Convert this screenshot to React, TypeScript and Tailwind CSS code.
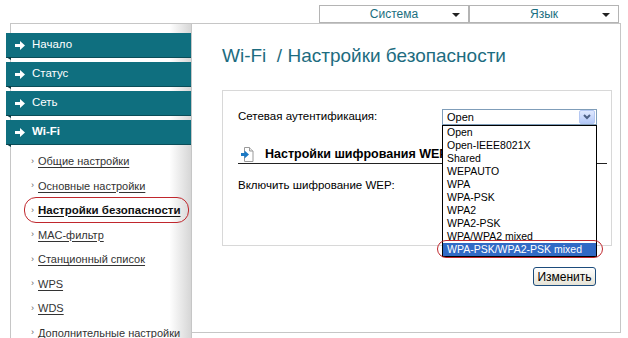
import React from 'react';

const TEAL = '#0f6f7f';

const menu = ['Начало', 'Статус', 'Сеть', 'Wi-Fi'];
const submenu = [
  'Общие настройки',
  'Основные настройки',
  'Настройки безопасности',
  'MAC-фильтр',
  'Станционный список',
  'WPS',
  'WDS',
  'Дополнительные настройки',
];
const options = [
  'Open',
  'Open-IEEE8021X',
  'Shared',
  'WEPAUTO',
  'WPA',
  'WPA-PSK',
  'WPA2',
  'WPA2-PSK',
  'WPA/WPA2 mixed',
  'WPA-PSK/WPA2-PSK mixed',
];

function ArrowIcon() {
  return (
    <svg width="10" height="9" viewBox="0 0 10 9" className="shrink-0">
      <path d="M0 3h5V0l5 4.5L5 9V6H0z" fill="#fff" />
    </svg>
  );
}

function PageIcon() {
  return (
    <svg width="13" height="15" viewBox="0 0 13 15" className="shrink-0">
      <path d="M3.5 0.5h5l3.5 3.5v10.5h-8.5z" fill="#fff" stroke="#9a9a9a" />
      <path d="M8.5 0.5v3.5h3.5" fill="#e8e8e8" stroke="#9a9a9a" />
      <path d="M0 6h3.5V3.5L8 7.5l-4.5 4V9H0z" fill="#1b79c4" />
    </svg>
  );
}

function TopButton({ label }: { label: string }) {
  return (
    <div className="relative flex h-[18px] w-[150px] items-center justify-center border border-[#b4b4b4] bg-white text-[12px] text-[#1a6e80]">
      {label}
      <span className="absolute right-[8px] top-[7px] h-0 w-0 border-x-[4px] border-t-[4px] border-x-transparent border-t-[#222]" />
    </div>
  );
}

export default function App() {
  return (
    <div className="h-[338px] w-[628px] overflow-hidden bg-white font-['Liberation_Sans',Arial,sans-serif] text-[11.5px] text-black">
      <div className="flex h-[23px] pl-[319px] pt-[5px]">
        <TopButton label="Система" />
        <TopButton label="Язык" />
      </div>

      <div className="ml-[10px] flex w-[611px] border-t border-[#c6c6c6]">
        {/* sidebar */}
        <div className="h-[320px] w-[182px] shrink-0 border-x border-[#c6c6c6] bg-linear-to-r from-white from-[88%] to-[#d6d6d6] pt-[9px]">
          {menu.map((m) => (
            <div
              key={m}
              className="relative -ml-[5px] mb-[4px] flex h-[25px] w-[185px] items-center gap-[7px] border-b border-[#0a4d58] pl-[9px] text-[11.5px] text-white"
              style={{ backgroundColor: TEAL }}
            >
              <ArrowIcon />
              <span className={m === 'Wi-Fi' ? 'font-bold' : ''}>{m}</span>
              <span className="absolute left-0 top-full h-[3px] w-[5px] bg-[#0a3f48] [clip-path:polygon(0_0,100%_0,100%_100%)]" />
            </div>
          ))}
          <div className="mt-[1px]">
            {submenu.map((s) => {
              const active = s === 'Настройки безопасности';
              return (
                <div key={s} className="relative flex h-[24.5px] items-center gap-[4px] pl-[20px]">
                  <span className="text-[9px] text-[#666]">›</span>
                  <span
                    className={
                      'whitespace-nowrap underline underline-offset-2 ' +
                      (active ? 'text-[11.5px] font-bold text-[#111]' : 'text-[11px] text-[#333]')
                    }
                  >
                    {s}
                  </span>
                  {active && (
                    <span className="absolute -top-[1px] left-[13px] h-[26px] w-[165px] rounded-[12px] border border-[#c0272d]" />
                  )}
                </div>
              );
            })}
          </div>
        </div>

        {/* main */}
        <div className="h-[309px] flex-1 border-b border-r border-[#c6c6c6] pl-[30px] pr-[8px] pt-[20px]">
          <h1 className="h-[24px] whitespace-pre text-[19px] leading-[24px] text-[#1d6c80]">Wi-Fi  / Настройки безопасности</h1>

          <div className="mt-[22px] h-[156px] w-[390px] border border-[#d8d8d8] pt-[18px]">
            <div className="flex h-[16px] items-center justify-between pl-[15px] pr-[14px]">
              <span>Сетевая аутентификация:</span>
              <div className="relative">
                <div className="flex h-[16px] w-[155px] items-center justify-between border border-[#7f9db9] bg-white pl-[4px] pr-[1px] text-[11px]">
                  <span>Open</span>
                  <span className="flex h-[14px] w-[16px] items-center justify-center rounded-[2px] border border-[#b5c8f2] bg-linear-to-b from-[#dfe8fe] to-[#b4c9f8]">
                    <svg width="8" height="6" viewBox="0 0 8 6">
                      <path d="M1 1l3 3 3-3" fill="none" stroke="#4d6185" strokeWidth="2" />
                    </svg>
                  </span>
                </div>
                <div className="absolute left-0 top-[16px] z-10 w-[155px] border border-black bg-white text-[10.5px]">
                  {options.map((o) => {
                    const sel = o === 'WPA-PSK/WPA2-PSK mixed';
                    return (
                      <div
                        key={o}
                        className={'flex h-[13px] items-center whitespace-nowrap pl-[4px] ' + (sel ? 'bg-[#316ac5] text-white' : '')}
                      >
                        {o}
                      </div>
                    );
                  })}
                  <span className="absolute -left-[6px] bottom-[-2px] h-[18px] w-[166px] rounded-[9px] border border-[#c0272d]" />
                </div>
              </div>
            </div>

            <div className="ml-[15px] mr-[4px] mt-[20px] flex h-[19px] items-center gap-[11px] border-b border-[#222] pl-[3px]">
              <PageIcon />
              <span className="whitespace-nowrap text-[12.5px] font-bold">Настройки шифрования WEP</span>
            </div>

            <div className="mt-[14px] flex h-[16px] items-center pl-[15px]">
              <span>Включить шифрование WEP:</span>
            </div>
          </div>

          <div className="mt-[21px] flex w-[390px] justify-end pr-[16px]">
            <button className="h-[19px] w-[63px] rounded-[3px] border border-[#1c4c7c] bg-linear-to-b from-white to-[#e6e3d6] text-[12px] text-black">
              Изменить
            </button>
          </div>
        </div>
      </div>
    </div>
  );
}
